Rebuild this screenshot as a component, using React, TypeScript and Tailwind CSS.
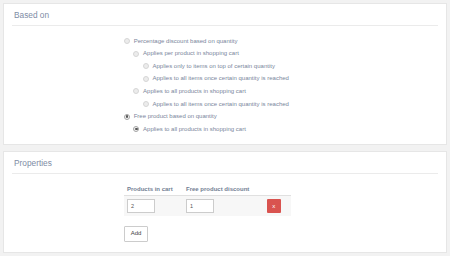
import React from "react";

type Item = { label: string; level: number; checked?: boolean };

const items: Item[] = [
  { label: "Percentage discount based on quantity", level: 0 },
  { label: "Applies per product in shopping cart", level: 1 },
  { label: "Applies only to items on top of certain quantity", level: 2 },
  { label: "Applies to all items once certain quantity is reached", level: 2 },
  { label: "Applies to all products in shopping cart", level: 1 },
  { label: "Applies to all items once certain quantity is reached", level: 2 },
  { label: "Free product based on quantity", level: 0, checked: true },
  { label: "Applies to all products in shopping cart", level: 1, checked: true },
];

function Radio({ checked }: { checked?: boolean }) {
  return (
    <span
      className={
        "flex h-[6px] w-[6px] shrink-0 items-center justify-center rounded-full border-[0.5px] " +
        (checked ? "border-[#a5a5a5] bg-[#f2f2f2]" : "border-[#d6d6d6] bg-[#ececec]")
      }
    >
      {checked ? <span className="h-[2.5px] w-[2.5px] rounded-full bg-[#555]" /> : null}
    </span>
  );
}

const levelPad = ["pl-0", "pl-[9.4px]", "pl-[18.8px]"];

export default function App() {
  return (
    <div
      className="flex h-[256px] w-[450px] flex-col gap-[6px] bg-[#f2f2f2] px-[3px] pt-[3px]"
      style={{ fontFamily: '"Liberation Sans", Arial, sans-serif' }}
    >
      <div className="flex h-[142px] flex-col border-[0.5px] border-[#e6e6e6] bg-white px-[8px]">
        <div className="flex h-[22px] items-center border-b border-[#ebebeb] pl-[2px] pt-[1px] text-[8.3px] text-[#7e8ca5]">
          Based on
        </div>
        <div className="flex flex-col pl-[112px] pt-[9px]">
          {items.map((it, i) => (
            <div
              key={i}
              className={"flex h-[12.55px] items-center gap-[3.7px] text-[6px] text-[#7a869b] " + levelPad[it.level]}
            >
              <Radio checked={it.checked} />
              <span className="whitespace-nowrap">{it.label}</span>
            </div>
          ))}
        </div>
      </div>
      <div className="flex h-[102px] flex-col border-[0.5px] border-[#e6e6e6] bg-white px-[8px]">
        <div className="flex h-[22px] items-center border-b border-[#ebebeb] pl-[2px] pt-[1px] text-[8.3px] text-[#7e8ca5]">
          Properties
        </div>
        <div className="flex flex-col pl-[112px] pt-[9px]">
          <div className="flex h-[12px] items-center text-[6px] font-bold text-[#727e93]">
            <div className="w-[59px] pl-[3px]">Products in cart</div>
            <div className="w-[80.7px] pl-[3px] whitespace-nowrap">Free product discount</div>
            <div className="w-[27.3px]" />
          </div>
          <div className="flex h-[21px] w-[167px] items-center border-t border-[#e0e0e0] bg-[#f7f7f7]">
            <div className="w-[59px] pl-[3px]">
              <div className="flex h-[13.5px] w-[28px] items-center border-[0.5px] border-[#cccccc] bg-white pl-[3px] text-[5.5px] text-[#555]">
                2
              </div>
            </div>
            <div className="w-[80.7px] pl-[3px]">
              <div className="flex h-[13.5px] w-[28px] items-center border-[0.5px] border-[#cccccc] bg-white pl-[3px] text-[5.5px] text-[#555]">
                1
              </div>
            </div>
            <div className="w-[27.3px] pl-[3px]">
              <div className="flex h-[13.5px] w-[14px] items-center justify-center rounded-[1px] bg-[#d9534f] text-[6px] text-white">
                x
              </div>
            </div>
          </div>
          <div className="pt-[10px]">
            <div className="flex h-[15.5px] w-[24px] items-center justify-center rounded-[1px] border-[0.5px] border-[#cccccc] bg-white text-[6px] text-[#444]">
              Add
            </div>
          </div>
        </div>
      </div>
    </div>
  );
}
